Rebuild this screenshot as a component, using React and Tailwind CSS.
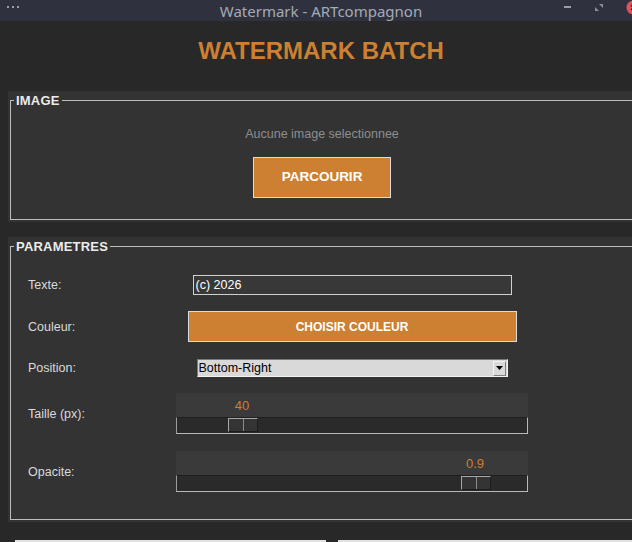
import React from 'react';

const ORANGE = 'bg-[#cd7f32]';

const TitleBar = () => (
  <div className="relative flex h-[21px] items-center justify-center bg-[#2f323e] font-['Noto_Sans',sans-serif]">
    {/* left menu dots */}
    <div className="absolute left-[7px] top-[6px] flex gap-[3px]">
      <span className="h-[2px] w-[2px] bg-[#9aa0ab]" />
      <span className="h-[2px] w-[2px] bg-[#9aa0ab]" />
      <span className="h-[2px] w-[2px] bg-[#9aa0ab]" />
    </div>
    <span className="text-[15px] leading-[20px] text-[#a4aab6]">Watermark - ARTcompagnon</span>
    {/* window controls */}
    <span className="absolute left-[564px] top-[6px] h-[2px] w-[7px] bg-[#9aa0ab]" />
    <svg className="absolute left-[595px] top-[4px]" width="8" height="7" viewBox="0 0 8 7">
      <polygon points="4,0 8,0 8,4" fill="#8a909b" />
      <polygon points="0,3 4,7 0,7" fill="#8a909b" />
    </svg>
    <svg className="absolute left-[626px] top-0" width="16" height="16" viewBox="0 0 16 16">
      <circle cx="7.5" cy="7.5" r="7" fill="#e0525c" />
      <path d="M5 5 L10 10 M10 5 L5 10" stroke="#6b2026" strokeWidth="1.6" />
    </svg>
  </div>
);

const Frame = ({ title, children, className = '' }) => (
  <div className={`mx-2 bg-[#333333] pl-[2px] pt-[2px] pb-[2px] ${className}`}>
    <fieldset className="m-0 border border-[#bdbdbd] p-0">
      <legend className="ml-[3px] px-[2px] text-[13px] font-bold leading-[15px] tracking-[0.2px] text-[#ececec]">{title}</legend>
      {children}
    </fieldset>
  </div>
);

const Slider = ({ value, min, max }) => {
  const offset = Math.round(((value - min) / (max - min)) * 320);
  return (
    <div className="w-[352px]">
      <div className="relative h-[24px] bg-[#3a3a3a]">
        <span
          className="absolute top-[5px] w-[30px] text-center text-[13px] leading-[16px] text-[#cd7f32]"
          style={{ left: offset }}
        >
          {value}
        </span>
      </div>
      <div className="relative h-[17px] border-t border-l border-r border-b border-t-[#1f1f1f] border-l-[#9c9c9c] border-r-[#b8b8b8] border-b-[#b8b8b8] bg-[#2a2a2a]">
        <div
          className="absolute top-0 flex h-[14px] w-[30px] border-t border-l border-b border-r border-t-[#a8a8a8] border-l-[#a8a8a8] border-b-[#1c1c1c] border-r-[#1c1c1c] bg-[#343434]"
          style={{ left: offset }}
        >
          <div className="flex-1" />
          <div className="w-px bg-[#8c8c8c]" />
          <div className="flex-1" />
        </div>
      </div>
    </div>
  );
};

const Row = ({ label, children, className = '' }) => (
  <div className={`grid grid-cols-[148px_352px] items-center ${className}`}>
    <span className="text-[12.5px] leading-[14px] text-[#dadada]">{label}</span>
    <div className="flex justify-center">{children}</div>
  </div>
);

export default function App() {
  return (
    <div className="h-[542px] w-[632px] overflow-hidden bg-[#282828] font-['Liberation_Sans',Arial,sans-serif]">
      <div className="w-[642px]">
        <TitleBar />

        <h1 className="mt-4 mb-[26px] text-center text-[24px] font-bold leading-[28px] text-[#cd7f32]">
          WATERMARK BATCH
        </h1>

        {/* image section */}
        <Frame title="IMAGE">
          <div className="flex flex-col items-center pt-[19px] pb-[21px]">
            <p className="text-[12.5px] leading-[14px] text-[#8e8e8e]">Aucune image selectionnee</p>
            <button className={`mt-4 h-[41px] w-[138px] border border-[#dcdcdc] ${ORANGE} text-[13.5px] font-bold text-white`}>
              PARCOURIR
            </button>
          </div>
        </Frame>

        {/* parameters section */}
        <Frame title="PARAMETRES" className="mt-[15px]">
          <div className="flex flex-col gap-4 pl-[17px] pt-[21px] pb-[27px]">
            <Row label="Texte:">
              <input
                readOnly
                value="(c) 2026"
                className="h-[20px] w-[319px] border border-[#d0d0d0] bg-[#383838] px-[2px] text-[12.5px] text-white outline-none"
              />
            </Row>
            <Row label="Couleur:">
              <button className={`h-[31px] w-[329px] border border-[#dcdcdc] ${ORANGE} text-[12px] font-bold text-white`}>
                CHOISIR COULEUR
              </button>
            </Row>
            <Row label="Position:" className="mt-px">
              <div className="flex h-[18px] w-[311px] items-center justify-between border border-t-[#7a7a7a] border-l-[#7a7a7a] border-b-[#f2f2f2] border-r-[#f2f2f2] bg-[#d9d9d9] pl-[1px] pr-[1px]">
                <span className="text-[12.5px] leading-[14px] text-black">Bottom-Right</span>
                <span className="flex h-[15px] w-[13px] items-center justify-center border border-t-[#f4f4f4] border-l-[#f4f4f4] border-b-[#808080] border-r-[#808080] bg-[#d9d9d9]">
                  <svg width="7" height="4" viewBox="0 0 7 4">
                    <polygon points="0,0 7,0 3.5,4" fill="#000" />
                  </svg>
                </span>
              </div>
            </Row>
            <Row label="Taille (px):">
              <Slider value={40} min={10} max={200} />
            </Row>
            <Row label="Opacite:" className="mt-px">
              <Slider value={0.9} min={0.1} max={1} />
            </Row>
          </div>
        </Frame>

        {/* bottom buttons (cut off by the window) */}
        <div className="mt-[18px] flex gap-3 pl-[15px]">
          <div className="h-[20px] w-[311px] border-t-2 border-[#e2e2e2]" />
          <div className="h-[20px] flex-1 border-t-2 border-[#e2e2e2]" />
        </div>
      </div>
    </div>
  );
}
